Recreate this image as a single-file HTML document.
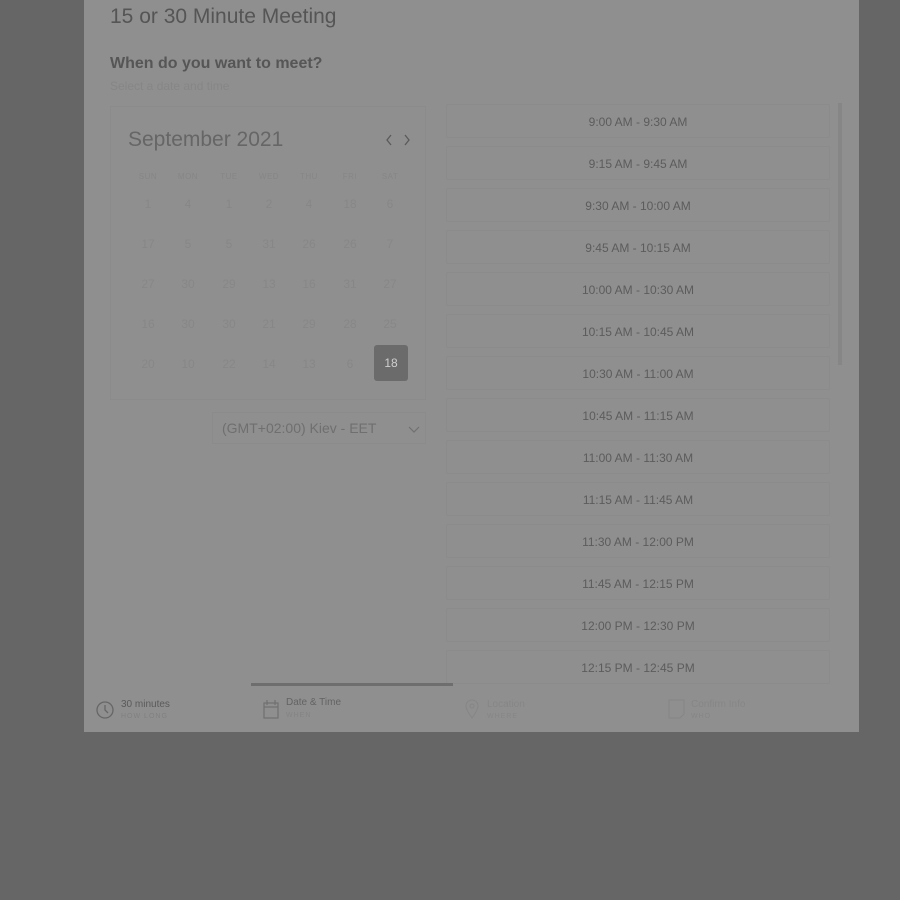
<!DOCTYPE html>
<html><head><style>
body{margin:0;width:900px;height:900px;background:#666;font-family:"Liberation Sans",sans-serif;position:relative;overflow:hidden}
.p{position:absolute;left:84px;top:0;width:775px;height:732px;background:#8f8f8f}
.a{position:absolute;white-space:nowrap}
.slot{position:absolute;left:446px;width:384px;height:34px;border:1px solid #8b8b8b;box-sizing:border-box;text-align:center;line-height:34px;font-size:12px;color:#5c5c5c;border-radius:2px}
.d{position:absolute;width:40px;text-align:center;font-size:12px;color:#878787}
.w{position:absolute;width:40px;text-align:center;font-size:8px;color:#868686;letter-spacing:.5px}
</style></head><body>
<div class="p"></div>
<div class="a" style="left:110px;top:5px;font-size:21px;color:#555">15 or 30 Minute Meeting</div>
<div class="a" style="left:110px;top:55px;font-size:16px;font-weight:bold;color:#565656">When do you want to meet?</div>
<div class="a" style="left:110px;top:79px;font-size:12px;color:#868686">Select a date and time</div>
<div class="a" style="left:110px;top:106px;width:316px;height:294px;border:1px solid #8b8b8b;box-sizing:border-box"></div>
<div class="a" style="left:128px;top:128px;font-size:21px;color:#666">September 2021</div>
<svg class="a" style="left:383px;top:133px" width="30" height="14"><path d="M8 2l-4 5 4 5M22 2l4 5-4 5" stroke="#5a5a5a" fill="none" stroke-width="1.3"/></svg>
<div class="w" style="left:128px;top:172px">SUN</div><div class="w" style="left:168px;top:172px">MON</div><div class="w" style="left:209px;top:172px">TUE</div><div class="w" style="left:249px;top:172px">WED</div><div class="w" style="left:289px;top:172px">THU</div><div class="w" style="left:330px;top:172px">FRI</div><div class="w" style="left:370px;top:172px">SAT</div>
<div id="cal"></div>
<div class="a" style="left:374px;top:345px;width:34px;height:36px;background:#6b6b6b;border-radius:3px;color:#cfcfcf;font-size:12px;text-align:center;line-height:37px">18</div>
<div class="a" style="left:212px;top:412px;width:214px;height:32px;border:1px solid #8b8b8b;box-sizing:border-box"></div>
<div class="a" style="left:222px;top:420px;font-size:14px;color:#6f6f6f">(GMT+02:00) Kiev - EET</div>
<svg class="a" style="left:408px;top:424px" width="12" height="10"><path d="M1 3l5 5 5-5" stroke="#707070" fill="none" stroke-width="1.2"/></svg>
<div class="a" style="left:838px;top:103px;width:4px;height:262px;background:#868686"></div>
<div id="slots"></div>
<div class="a" style="left:251px;top:683px;width:202px;height:3px;background:#6e6e6e"></div>
<svg class="a" style="left:96px;top:701px" width="18" height="18"><circle cx="9" cy="9" r="8" stroke="#666" fill="none" stroke-width="1.3"/><path d="M9 4v5l3 3" stroke="#666" fill="none" stroke-width="1.3"/></svg>
<div class="a" style="left:121px;top:699px;font-size:10px;color:#5a5a5a">30 minutes</div>
<div class="a" style="left:121px;top:713px;font-size:7px;color:#808080;letter-spacing:1px">HOW LONG</div>
<svg class="a" style="left:263px;top:699px" width="16" height="20"><rect x="1" y="4" width="14" height="15" stroke="#707070" fill="none" stroke-width="1.2"/><path d="M1 8h14M4 1v5M12 1v5" stroke="#707070" stroke-width="1.2"/></svg>
<div class="a" style="left:286px;top:697px;font-size:10px;color:#636363">Date &amp; Time</div>
<div class="a" style="left:286px;top:712px;font-size:7px;color:#848484;letter-spacing:1px">WHEN</div>
<svg class="a" style="left:465px;top:699px" width="14" height="20"><path d="M7 19C3 13 1 10 1 7a6 6 0 0112 0c0 3-2 6-6 12z" stroke="#868686" fill="none"/><circle cx="7" cy="7" r="2" stroke="#868686" fill="none"/></svg>
<div class="a" style="left:487px;top:699px;font-size:10px;color:#868686">Location</div>
<div class="a" style="left:487px;top:713px;font-size:7px;color:#868686;letter-spacing:1px">WHERE</div>
<svg class="a" style="left:668px;top:699px" width="18" height="20"><path d="M1 1h15v14l-4 4H1z" stroke="#868686" fill="none"/></svg>
<div class="a" style="left:691px;top:699px;font-size:10px;color:#868686">Confirm Info</div>
<div class="a" style="left:691px;top:713px;font-size:7px;color:#868686;letter-spacing:1px">WHO</div>
<script>
var r=[[1,4,1,2,4,18,6],[17,5,5,31,26,26,7],[27,30,29,13,16,31,27],[16,30,30,21,29,28,25],[20,10,22,14,13,6,'']];
var h='',xs=[128,168,209,249,289,330,370];
r.forEach(function(row,i){row.forEach(function(v,j){h+='<div class="d" style="left:'+xs[j]+'px;top:'+(197+i*40)+'px">'+v+'</div>'})});
document.getElementById('cal').innerHTML=h;
var s=['9:00 AM - 9:30 AM','9:15 AM - 9:45 AM','9:30 AM - 10:00 AM','9:45 AM - 10:15 AM','10:00 AM - 10:30 AM','10:15 AM - 10:45 AM','10:30 AM - 11:00 AM','10:45 AM - 11:15 AM','11:00 AM - 11:30 AM','11:15 AM - 11:45 AM','11:30 AM - 12:00 PM','11:45 AM - 12:15 PM','12:00 PM - 12:30 PM','12:15 PM - 12:45 PM'];
h='';s.forEach(function(t,i){h+='<div class="slot" style="top:'+(104+i*42)+'px">'+t+'</div>'});
document.getElementById('slots').innerHTML=h;
</script>
</body></html>
